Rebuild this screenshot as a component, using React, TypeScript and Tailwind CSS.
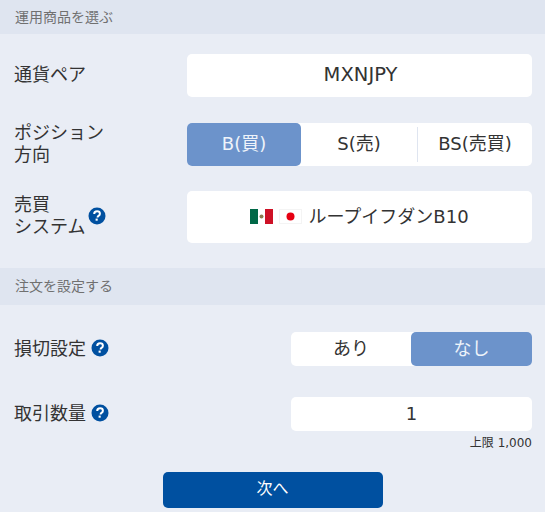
const font = "font-['DejaVu_Sans','Noto_Sans_CJK_JP',sans-serif]"

function Help({ className = "" }: { className?: string }) {
  return (
    <svg viewBox="0 0 18 18" className={`h-[18px] w-[18px] shrink-0 ${className}`}>
      <circle cx="9" cy="9" r="8.5" fill="#0050a0" />
      <path
        d="M6.2 7c0-1.7 1.2-2.7 2.9-2.7 1.6 0 2.8.9 2.8 2.4 0 1.1-.6 1.7-1.4 2.2-.7.5-.9.8-.9 1.5"
        fill="none"
        stroke="#fff"
        strokeWidth="2"
      />
      <rect x="7.6" y="11.6" width="2.1" height="2.1" fill="#fff" />
    </svg>
  )
}

function SectionHeader({ title, className }: { title: string; className: string }) {
  return (
    <div className={`flex items-center bg-[#dfe5f0] px-[15px] text-[14px] text-[#707070] ${className}`}>
      {title}
    </div>
  )
}

function MexicoFlag() {
  return (
    <svg viewBox="0 0 23 15" className="h-[15px] w-[23px]">
      <rect width="8" height="15" fill="#006847" />
      <rect x="8" width="7" height="15" fill="#fff" />
      <rect x="15" width="8" height="15" fill="#ce1126" />
      <circle cx="11.5" cy="7.5" r="2" fill="#8c7b50" />
    </svg>
  )
}

function JapanFlag() {
  return (
    <svg viewBox="0 0 23 15" className="h-[15px] w-[23px]">
      <rect x="0.5" y="0.5" width="22" height="14" fill="#fff" stroke="#f4f4f4" />
      <circle cx="11.5" cy="7.5" r="4" fill="#e60012" />
    </svg>
  )
}

export default function App() {
  return (
    <div className={`h-[512px] w-[545px] overflow-hidden bg-[#e9edf5] text-[#333] ${font}`}>
      <SectionHeader title="運用商品を選ぶ" className="h-[34px]" />

      <div className="pl-[14px] pr-[13px] pt-[20px]">
        <div className="flex items-center justify-between">
          <div className="pb-[2px] text-[18px]">通貨ペア</div>
          <div className="flex h-[43px] w-[345px] items-center justify-center rounded-[5px] bg-white pb-[2px] pl-[2px] text-[19.5px]">
            MXNJPY
          </div>
        </div>

        <div className="mt-[26px] flex h-[43px] items-center justify-between">
          <div className="pb-[2px] text-[18px] leading-[22px]">
            ポジション
            <br />
            方向
          </div>
          <div className="flex h-[43px] w-[345px] items-center rounded-[5px] bg-white text-[18px]">
            <div className="flex h-full w-[114px] items-center justify-center rounded-[5px] bg-[#6c93cb] pb-[2px] text-[#eef3fa]">
              B(買)
            </div>
            <div className="flex h-full w-[116px] items-center justify-center pb-[2px]">S(売)</div>
            <div className="h-[35px] w-px bg-[#dfe5f0]" />
            <div className="flex h-full flex-1 items-center justify-center pb-[2px]">BS(売買)</div>
          </div>
        </div>

        <div className="mt-[25px] flex items-center justify-between">
          <div className="flex items-center pb-[2px]">
            <div className="text-[18px] leading-[22px]">
              売買
              <br />
              システム
            </div>
            <Help className="ml-[3px]" />
          </div>
          <div className="flex h-[52px] w-[345px] items-center justify-center gap-[6px] rounded-[5px] bg-white pb-[2px] text-[18px]">
            <MexicoFlag />
            <JapanFlag />
            <span>ループイフダンB10</span>
          </div>
        </div>
      </div>

      <SectionHeader title="注文を設定する" className="mt-[25px] h-[37px]" />

      <div className="pl-[14px] pr-[13px] pt-[27px]">
        <div className="flex items-center justify-between">
          <div className="flex items-center gap-[5px] pb-[2px] text-[18px]">
            損切設定
            <Help />
          </div>
          <div className="flex h-[34px] w-[241px] rounded-[5px] bg-white text-[18px]">
            <div className="flex h-full w-[120px] items-center justify-center pb-[2px]">あり</div>
            <div className="flex h-full flex-1 items-center justify-center rounded-[5px] bg-[#6c93cb] pb-[2px] text-[#eef3fa]">
              なし
            </div>
          </div>
        </div>

        <div className="mt-[31px] flex items-center justify-between">
          <div className="flex items-center gap-[5px] pb-[2px] text-[18px]">
            取引数量
            <Help />
          </div>
          <div className="flex h-[34px] w-[241px] items-center justify-center rounded-[5px] bg-white pb-[2px] text-[18px]">
            1
          </div>
        </div>

        <div className="mt-[3px] text-right text-[12px] leading-[18px]">上限 1,000</div>
      </div>

      <div className="mt-[20px] flex justify-center">
        <div className="flex h-[36px] w-[220px] items-center justify-center rounded-[5px] bg-[#0050a0] pb-[2px] text-[16px] text-white">
          次へ
        </div>
      </div>
    </div>
  )
}
